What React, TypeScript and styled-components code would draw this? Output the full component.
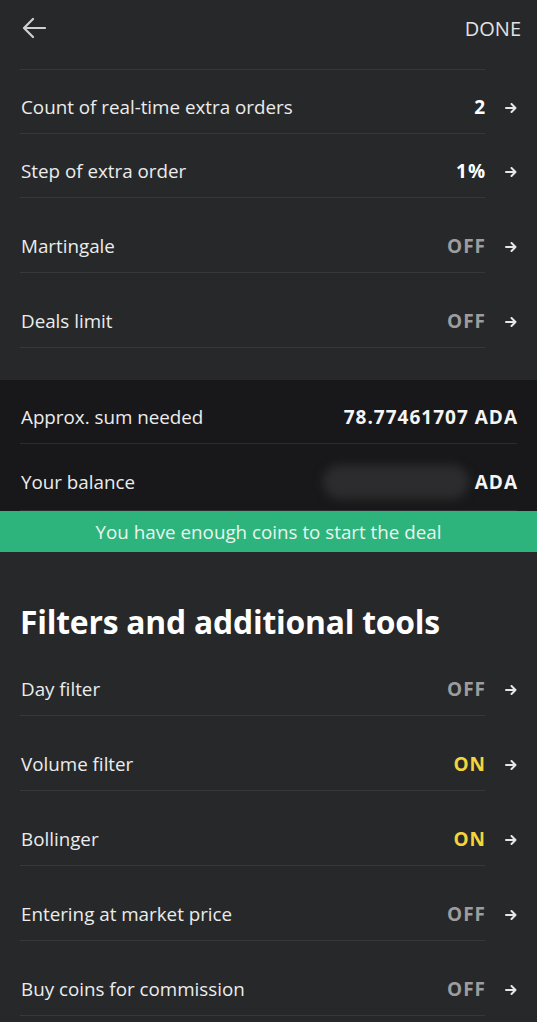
import styled, { createGlobalStyle } from "styled-components";

const GlobalStyle = createGlobalStyle`
  html, body {
    margin: 0;
    padding: 0;
    background: #27282a;
  }
  body {
    font-family: "Open Sans", Lato, sans-serif;
    color: #f1f1f1;
    -webkit-font-smoothing: antialiased;
  }
`;

const Page = styled.div`
  width: 537px;
  height: 1022px;
  overflow: hidden;
  background: #27282a;
`;

const Header = styled.div`
  height: 56px;
  display: flex;
  align-items: center;
  justify-content: space-between;
  padding: 0 16px 0 22px;
  margin-bottom: 13px;
`;

const BackBtn = styled.button`
  background: none;
  border: none;
  padding: 0;
  display: flex;
  color: #d0d0d0;
  cursor: pointer;
`;

const DoneBtn = styled.button`
  background: none;
  border: none;
  padding: 0;
  font-family: inherit;
  font-size: 20px;
  color: #e2e2e2;
`;

const Row = styled.div<{ h: number }>`
  display: flex;
  padding: 0 20px;
  height: ${(props) => props.h}px;
`;
const RowMain = styled.div<{ top?: boolean }>`
  flex: 1;
  display: flex;
  align-items: flex-end;
  justify-content: space-between;
  border-bottom: 1px solid #37383a;
  border-top: ${(props) => (props.top ? "1px solid #37383a" : "none")};
  padding: 0 0 15px 1px;
  line-height: 22px;
`;
const Label = styled.span`
  font-size: 18.8px;
  color: #ececec;
`;
const Value = styled.span<{ color: string }>`
  font-size: 19px;
  font-weight: 700;
  letter-spacing: 1px;
  margin-right: -1px;
  color: ${(props) => props.color};
`;
const ArrowCell = styled.div`
  width: 32px;
  display: flex;
  align-items: flex-end;
  justify-content: flex-end;
  padding-bottom: 21px;
  color: #e6e6e6;
`;

const Spacer = styled.div<{ h: number }>`
  height: ${(props) => props.h}px;
`;

const Summary = styled.div`
  background: #18181a;
  padding: 0 20px;
`;
const SummaryRow = styled.div<{ h: number; pb: number }>`
  height: ${(props) => props.h}px;
  box-sizing: border-box;
  display: flex;
  align-items: flex-end;
  justify-content: space-between;
  border-bottom: 1px solid #2c2c2e;
  padding: 0 0 ${(props) => props.pb}px 1px;
  line-height: 22px;
`;
const Amount = styled.span`
  display: flex;
  align-items: center;
  font-size: 19px;
  font-weight: 700;
  letter-spacing: 1px;
  margin-right: -1px;
  color: #f5f5f5;
`;
const Smudge = styled.span`
  display: inline-block;
  width: 146px;
  height: 34px;
  margin: -6px 6px -6px 0;
  border-radius: 18px;
  background: #2c2c2e;
  filter: blur(5px);
`;

const Banner = styled.div`
  height: 41px;
  background: #2db37c;
  display: flex;
  align-items: center;
  justify-content: center;
  font-size: 18.8px;
  color: #e8f6ee;
`;

const Heading = styled.h2`
  margin: 0;
  padding: 48px 20px 0 20px;
  height: 89px;
  box-sizing: border-box;
  font-size: 31.8px;
  font-weight: 700;
  color: #ffffff;
  line-height: 44px;
  letter-spacing: -0.2px;
`;

const Arrow = () => (
  <svg width="12" height="10" viewBox="0 0 12 10" fill="none">
    <path
      d="M1 5h9.5M6.5 1l4 4-4 4"
      stroke="currentColor"
      strokeWidth="2"
      strokeLinecap="round"
      strokeLinejoin="round"
    />
  </svg>
);

const BackArrow = () => (
  <svg width="24" height="22" viewBox="0 0 24 22" fill="none">
    <path
      d="M23 11H3M11 2L2 11l9 9"
      stroke="currentColor"
      strokeWidth="2.2"
      strokeLinecap="round"
      strokeLinejoin="round"
    />
  </svg>
);

const GREY = "#9d9d9f";
const WHITE = "#ffffff";
const YELLOW = "#f4d43d";

type Item = { label: string; value: string; color: string; h: number };

const settings: Item[] = [
  { label: "Count of real-time extra orders", value: "2", color: WHITE, h: 65 },
  { label: "Step of extra order", value: "1%", color: WHITE, h: 64 },
  { label: "Martingale", value: "OFF", color: GREY, h: 75 },
  { label: "Deals limit", value: "OFF", color: GREY, h: 75 },
];

const filters: Item[] = [
  { label: "Day filter", value: "OFF", color: GREY, h: 75 },
  { label: "Volume filter", value: "ON", color: YELLOW, h: 75 },
  { label: "Bollinger", value: "ON", color: YELLOW, h: 75 },
  { label: "Entering at market price", value: "OFF", color: GREY, h: 75 },
  { label: "Buy coins for commission", value: "OFF", color: GREY, h: 75 },
];

function SettingRow({ item, top }: { item: Item; top?: boolean }) {
  return (
    <Row h={item.h}>
      <RowMain top={top}>
        <Label>{item.label}</Label>
        <Value color={item.color}>{item.value}</Value>
      </RowMain>
      <ArrowCell>
        <Arrow />
      </ArrowCell>
    </Row>
  );
}

export default function App() {
  return (
    <Page>
      <GlobalStyle />
      <Header>
        <BackBtn>
          <BackArrow />
        </BackBtn>
        <DoneBtn>DONE</DoneBtn>
      </Header>
      {settings.map((item, i) => (
        <SettingRow key={item.label} item={item} top={i === 0} />
      ))}
      <Spacer h={32} />
      <Summary>
        <SummaryRow h={64} pb={15}>
          <Label>Approx. sum needed</Label>
          <Amount>78.77461707 ADA</Amount>
        </SummaryRow>
        <SummaryRow h={67} pb={17}>
          <Label>Your balance</Label>
          <Amount>
            <Smudge />
            ADA
          </Amount>
        </SummaryRow>
      </Summary>
      <Banner>You have enough coins to start the deal</Banner>
      <Heading>Filters and additional tools</Heading>
      {filters.map((item) => (
        <SettingRow key={item.label} item={item} />
      ))}
    </Page>
  );
}
